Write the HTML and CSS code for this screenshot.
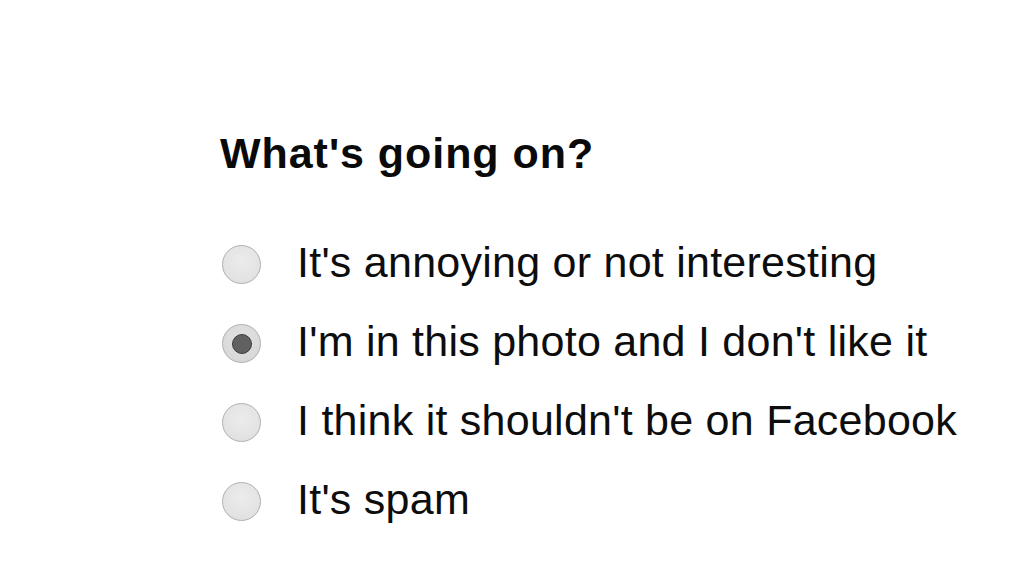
FILE: index.html
```html
<!DOCTYPE html>
<html>
<head>
<meta charset="utf-8">
<link rel="stylesheet" href="styles.css">
</head>
<body>
<div class="page">
  <h1 class="title">What's going on?</h1>
  <div class="options">
    <div class="option"><span class="radio"></span><span class="label">It's annoying or not interesting</span></div>
    <div class="option"><span class="radio checked"></span><span class="label">I'm in this photo and I don't like it</span></div>
    <div class="option"><span class="radio"></span><span class="label">I think it shouldn't be on Facebook</span></div>
    <div class="option"><span class="radio"></span><span class="label">It's spam</span></div>
  </div>
</div>
</body>
</html>
```

FILE: styles.css
```css
html, body {
  margin: 0;
  padding: 0;
  background: #ffffff;
}
body {
  width: 1024px;
  height: 576px;
  overflow: hidden;
  font-family: "Liberation Sans", Arial, sans-serif;
  color: #111111;
}
.page {
  padding: 132px 0 0 220px;
}
.title {
  margin: 0;
  font-size: 43px;
  line-height: 1;
  font-weight: bold;
  letter-spacing: 0.95px;
  color: #0a0a0a;
}
.options {
  margin-top: 50px;
  display: flex;
  flex-direction: column;
}
.option {
  height: 79px;
  display: flex;
  align-items: center;
}
.radio {
  box-sizing: border-box;
  width: 39px;
  height: 39px;
  margin-left: 2px;
  margin-right: 36px;
  border-radius: 50%;
  border: 1.5px solid #b0b0b0;
  background: radial-gradient(circle at 50% 40%, #ececec 0%, #e2e2e2 70%, #d6d6d6 100%);
  display: flex;
  align-items: center;
  justify-content: center;
  flex: none;
}
.radio.checked {
  background: radial-gradient(circle at 50% 40%, #e4e4e4 0%, #d8d8d8 70%, #cccccc 100%);
}
.radio.checked::after {
  content: "";
  width: 20px;
  height: 20px;
  border-radius: 50%;
  background: #616161;
  border: 1.5px solid #3c3c3c;
  box-sizing: border-box;
}
.label {
  font-size: 43px;
  line-height: 1;
  letter-spacing: 0.25px;
  padding-bottom: 4px;
  color: #0d0d0d;
}
```
